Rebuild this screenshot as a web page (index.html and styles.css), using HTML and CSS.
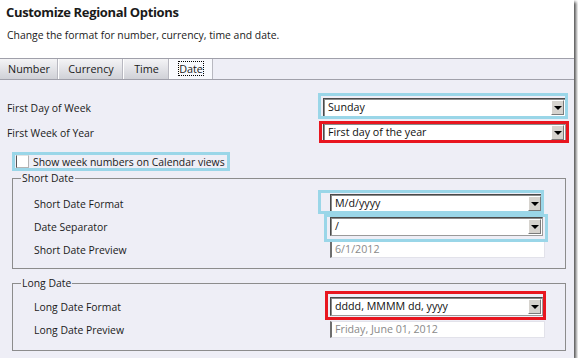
FILE: index.html
```html
<!DOCTYPE html>
<html lang="en">
<head>
    <meta charset="UTF-8">
    <title>Customize Regional Options</title>
    <link rel="stylesheet" href="styles.css">
</head>
<body>
    <div class="window">
        <header class="header">
            <h1 class="title">Customize Regional Options</h1>
            <p class="subtitle">Change the format for number, currency, time and date.</p>
        </header>

        <!-- Tabs -->
        <nav class="tabs">
            <div class="tab tab-number">Number</div>
            <div class="tab tab-currency">Currency</div>
            <div class="tab tab-time">Time</div>
            <div class="tab tab-active"><span class="focus">Date</span></div>
        </nav>

        <main class="panel">
            <div class="row">
                <span class="label">First Day of Week</span>
                <div class="combo combo-wide mark mark-blue mark-day">
                    <span class="combo-value">Sunday</span>
                    <span class="combo-btn"></span>
                </div>
            </div>
            <div class="row">
                <span class="label">First Week of Year</span>
                <div class="combo combo-wide mark mark-red mark-week">
                    <span class="combo-value">First day of the year</span>
                    <span class="combo-btn"></span>
                </div>
            </div>
            <div class="row row-check">
                <label class="check mark mark-blue mark-check">
                    <span class="check-box"></span>
                    Show week numbers on Calendar views
                </label>
            </div>

            <!-- Short date -->
            <fieldset class="group group-short">
                <legend>Short Date</legend>
                <div class="group-row">
                    <span class="label">Short Date Format</span>
                    <div class="combo mark mark-blue mark-format">
                        <span class="combo-value">M/d/yyyy</span>
                        <span class="combo-btn"></span>
                    </div>
                </div>
                <div class="group-row">
                    <span class="label">Date Separator</span>
                    <div class="combo mark mark-blue mark-sep">
                        <span class="combo-value">/</span>
                        <span class="combo-btn"></span>
                    </div>
                </div>
                <div class="group-row">
                    <span class="label">Short Date Preview</span>
                    <div class="preview">6/1/2012</div>
                </div>
            </fieldset>

            <!-- Long date -->
            <fieldset class="group group-long">
                <legend>Long Date</legend>
                <div class="group-row">
                    <span class="label">Long Date Format</span>
                    <div class="combo mark mark-red mark-long">
                        <span class="combo-value">dddd, MMMM dd, yyyy</span>
                        <span class="combo-btn"></span>
                    </div>
                </div>
                <div class="group-row">
                    <span class="label">Long Date Preview</span>
                    <div class="preview">Friday, June 01, 2012</div>
                </div>
            </fieldset>
        </main>
    </div>
</body>
</html>
```

FILE: styles.css
```css
:root {
    --panel-bg: #eeeef6;
    --line: #a0a0aa;
    --text: #1a1a1a;
    --mark-blue: #9ad6e8;
    --mark-red: #e8161f;
    --font: "Open Sans", "Noto Sans", sans-serif;
}

* {
    margin: 0;
    padding: 0;
    box-sizing: border-box;
}

body {
    background: #fff;
    font-family: var(--font);
    font-size: 10.4px;
    color: var(--text);
}

.window {
    width: 574px;
    height: 358px;
    background: var(--panel-bg);
    box-shadow: 2px 2px 3px rgba(0, 0, 0, 0.7);
    display: flex;
    flex-direction: column;
    overflow: hidden;
}

/* Header */
.header {
    background: #fff;
    height: 58px;
    padding: 3px 6px 0;
}

.title {
    font-size: 13px;
    font-weight: 700;
    line-height: 18px;
    letter-spacing: -0.35px;
}

.subtitle {
    margin-top: 6px;
    margin-left: 1px;
    line-height: 16px;
}

/* Tabs */
.tabs {
    display: flex;
    height: 22px;
    border-top: 1px solid var(--line);
    border-bottom: 1px solid var(--line);
    font-size: 10.8px;
}

.tab {
    line-height: 20px;
    text-align: center;
    background: linear-gradient(#f4f4f6, #d0d1d7);
    border-right: 1px solid #fff;
    box-shadow: inset -1px 0 #b8b8c0;
}

.tab-number { width: 59px; }
.tab-currency { width: 65px; }
.tab-time { width: 46px; }

.tab-active {
    width: 43px;
    background: #f8f9fd;
    border-right: 1px solid #b8b8c0;
    box-shadow: none;
}

.focus {
    outline: 1px dotted #000;
    outline-offset: -1px;
    padding: 0 1px;
}

/* Panel */
.panel {
    flex: 1;
    padding: 15px 8px 0;
}

.row {
    display: flex;
    justify-content: space-between;
    align-items: center;
    height: 25px;
}

.row .label {
    margin-left: -1px;
}

.row-check {
    height: 24px;
    margin-top: 2px;
    align-items: flex-end;
}

/* Combo box */
.combo {
    display: flex;
    width: 213px;
    height: 19px;
    background: #fff;
    border: 1px solid #9a9a9a;
    border-top-color: #4a4a4a;
    border-left-color: #4a4a4a;
    box-shadow: inset 1px 1px 0 #8a8a8a;
}

.combo-wide {
    width: 243px;
}

.combo-value {
    flex: 1;
    padding-left: 4px;
    line-height: 17px;
    font-size: 10.7px;
    color: #111;
}

.combo-btn {
    width: 13px;
    margin: 1px 1px 1px 0;
    background: #d6d3ce;
    border: 1px solid;
    border-color: #fff #7a7a7a #7a7a7a #fff;
    display: flex;
    align-items: center;
    justify-content: center;
}

.combo-btn::after {
    content: "";
    border-left: 4px solid transparent;
    border-right: 4px solid transparent;
    border-top: 4px solid #000;
}

/* Checkbox */
.check {
    display: inline-flex;
    align-items: center;
    gap: 4px;
    height: 19px;
    margin-left: 4px;
    padding: 0 5px 0 4px;
}

.check-box {
    width: 13px;
    height: 13px;
    background: #fff;
    border: 1px solid #b4b4b4;
    border-left-color: #555;
    border-top-color: #e4e4e4;
}

/* Group boxes */
.group {
    margin-left: 4px;
    border: 1px solid #8c8c8c;
    padding: 7px 22px 7px 21px;
}

.group legend {
    margin-left: -13px;
    padding: 0 1px;
    line-height: 14px;
}

.group-long {
    margin-top: 7px;
    padding-top: 5px;
    padding-bottom: 9px;
}

.group-row {
    display: flex;
    justify-content: space-between;
    align-items: center;
    height: 23px;
}

.preview {
    width: 215px;
    height: 17px;
    margin-right: -2px;
    background: #fff;
    border: 1px solid #e2e2ea;
    border-left: 2px solid #6e6e6e;
    padding-left: 3px;
    line-height: 15px;
    font-size: 10.7px;
    color: #8a8a8a;
}

/* Annotation frames */
.mark {
    position: relative;
}

.mark::before {
    content: "";
    position: absolute;
    border: 3px solid var(--mark-blue);
    pointer-events: none;
}

.mark-red::before {
    border-color: var(--mark-red);
}

.mark-day::before { top: -6px; left: -6px; right: -3px; bottom: -3px; }
.mark-week::before { top: -3px; left: -5px; right: -4px; bottom: -2px; }
.mark-check::before { top: 0; left: 0; right: 0; bottom: 0; }
.mark-format::before { top: -5px; left: -13px; right: -2px; bottom: -2px; }
.mark-sep::before { top: -4px; left: -7px; right: -6px; bottom: -7px; }
.mark-long::before { top: -7px; left: -6px; right: -4px; bottom: -5px; }
```
